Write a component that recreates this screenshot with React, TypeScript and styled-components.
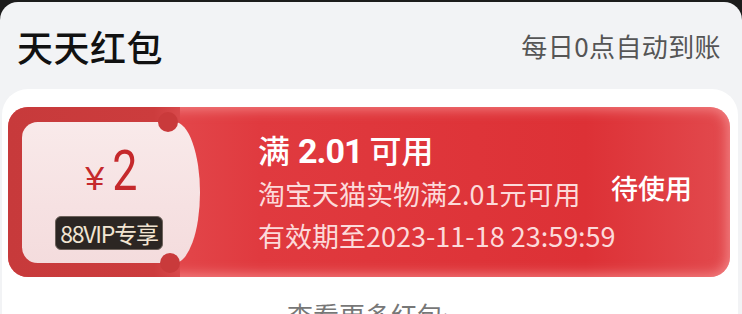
import React from "react";
import styled, { createGlobalStyle } from "styled-components";

const Global = createGlobalStyle`
  html, body { margin: 0; padding: 0; background: #1c1c1c; }
  body { font-family: "Noto Sans CJK SC", "Noto Sans", sans-serif; overflow: hidden; }
`;

const Sheet = styled.div`
  margin-top: 2px;
  height: 312px;
  background: #f2f3f5;
  border-radius: 18px 18px 0 0;
  overflow: hidden;
`;

const Header = styled.div`
  height: 87px;
  display: flex;
  align-items: center;
  justify-content: space-between;
  padding: 0 21px 0 17px;
`;

const Title = styled.div`
  font-size: 36px;
  color: #111;
  font-weight: 500;
  letter-spacing: 0.5px;
`;

const Hint = styled.div`
  font-size: 26px;
  color: #555;
  letter-spacing: 0.4px;
`;

const Card = styled.div`
  margin: 0 4px 0 2px;
  background: #fff;
  border-radius: 26px 26px 0 0;
  padding: 18px 8px 0 6px;
  height: 240px;
`;

const Coupon = styled.div`
  display: flex;
  height: 170px;
  border-radius: 20px;
  background: linear-gradient(90deg, #e75e60 0%, #e03a3f 35%, #dd3136 80%, #e24a4e 100%);
  box-shadow: inset 0 0 12px 3px rgba(255, 175, 175, 0.55);
`;

const Stub = styled.div`
  width: 172px;
  flex: none;
  box-sizing: border-box;
  padding: 15px 0 14px 14px;
  border-radius: 20px 0 0 20px;
  background: linear-gradient(90deg, #c73a3b 0%, #cc3c3d 85%, #d8494b 100%);
  display: flex;
`;

const Panel = styled.div`
  position: relative;
  flex: 1;
  margin-right: -20px;
  border-radius: 16px 26px 26px 16px / 16px 72px 72px 16px;
  background: linear-gradient(180deg, #f9eaea 0%, #f6e1e2 60%, #f4dcdd 100%);
  display: flex;
  flex-direction: column;
  align-items: center;
  padding-top: 24px;
  box-sizing: border-box;
`;

const Notch = styled.span<{ $bottom?: boolean }>`
  position: absolute;
  left: 136px;
  width: 20px;
  height: 20px;
  border-radius: 50%;
  background: #c93a3b;
  ${(p) => (p.$bottom ? "bottom: -10px; left: 138px;" : "top: -10px;")}
`;

const Amount = styled.div`
  display: flex;
  align-items: baseline;
  color: #c5292c;
  height: 50px;
  margin-left: 4px;
`;

const Yen = styled.span`
  font-family: "Liberation Sans", sans-serif;
  font-size: 34px;
  margin-right: 5px;
`;

const Big = styled.span`
  font-family: "Roboto", sans-serif;
  font-size: 56px;
  line-height: 50px;
  display: inline-block;
  transform: scaleX(0.8);
`;

const Badge = styled.div`
  margin-top: 20px;
  margin-left: -4px;
  background: #2c2623;
  color: #f1e4d2;
  border-radius: 6px;
  font-size: 23px;
  line-height: 32px;
  padding: 0 4px;
  border: 1px solid #6d615a;
  letter-spacing: -1.2px;
  white-space: nowrap;
`;

const Body = styled.div`
  flex: 1;
  min-width: 0;
  display: flex;
  align-items: center;
  padding: 0 38px 0 78px;
`;

const Info = styled.div`
  flex: 1;
  min-width: 0;
  display: flex;
  flex-direction: column;
  gap: 4px;
  white-space: nowrap;
`;

const Headline = styled.div`
  color: #fff;
  font-size: 32px;
  font-weight: 500;
  line-height: 40px;
`;

const Num = styled.span`
  font-family: "Roboto", sans-serif;
  font-weight: 700;
  font-size: 34px;
  letter-spacing: -1px;
  margin: 0 7px 0 8px;
`;

const Line = styled.div`
  color: #fcdada;
  font-size: 27px;
  line-height: 38px;
`;

const Status = styled.div`
  flex: none;
  color: #fff;
  font-size: 27px;
  font-weight: 500;
  margin-top: -10px;
  white-space: nowrap;
`;

const More = styled.div`
  text-align: center;
  margin-top: 20px;
  color: #777;
  font-size: 26px;
  line-height: 36px;
`;

export default function App() {
  return (
    <>
      <Global />
      <Sheet>
        <Header>
          <Title>天天红包</Title>
          <Hint>每日0点自动到账</Hint>
        </Header>
        <Card>
          <Coupon>
            <Stub>
              <Panel>
                <Notch />
                <Notch $bottom />
                <Amount>
                  <Yen>¥</Yen>
                  <Big>2</Big>
                </Amount>
                <Badge>88VIP专享</Badge>
              </Panel>
            </Stub>
            <Body>
              <Info>
                <Headline>
                  满<Num>2.01</Num>可用
                </Headline>
                <Line>淘宝天猫实物满2.01元可用</Line>
                <Line>有效期至2023-11-18 23:59:59</Line>
              </Info>
              <Status>待使用</Status>
            </Body>
          </Coupon>
          <More>查看更多红包›</More>
        </Card>
      </Sheet>
    </>
  );
}
